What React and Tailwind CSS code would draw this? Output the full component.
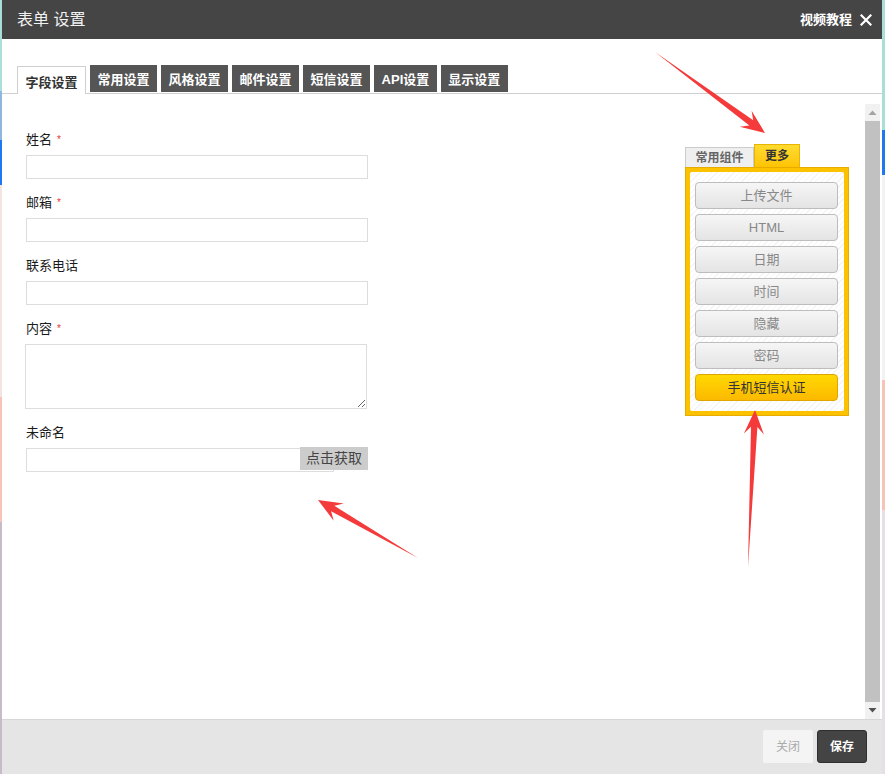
import React from 'react';

const tabs = ['常用设置', '风格设置', '邮件设置', '短信设置', 'API设置', '显示设置'];
const widgets = ['上传文件', 'HTML', '日期', '时间', '隐藏', '密码'];

const leftStrip = [
  ['h-[91px]', 'bg-[#a9dedb]'],
  ['h-[49px]', 'bg-[#8fb6dc]'],
  ['h-[45px]', 'bg-[#1f78f0]'],
  ['h-[212px]', 'bg-[#f3e3e3]'],
  ['h-[125px]', 'bg-[#f6c3b6]'],
  ['flex-1', 'bg-[#c6bcc9]'],
];

const rightStrip = [
  ['h-[130px]', 'bg-[#a9dedb]'],
  ['h-[45px]', 'bg-[#1f78f0]'],
  ['h-[205px]', 'bg-[#f3f3f3]'],
  ['h-[130px]', 'bg-[#f6c3b6]'],
  ['flex-1', 'bg-[#e6e0e6]'],
];

function arrow(tail, tip) {
  const dx = tip[0] - tail[0];
  const dy = tip[1] - tail[1];
  const len = Math.hypot(dx, dy);
  const d = [dx / len, dy / len];
  const n = [-d[1], d[0]];
  const L = 24, W = 10, w = 3.2, back = 17;
  const p = (a, b) => [tip[0] - d[0] * a + n[0] * b, tip[1] - d[1] * a + n[1] * b];
  const pts = [tip, p(L, W), p(back, w), tail, p(back, -w), p(L, -W)];
  return pts.map((q) => q[0].toFixed(1) + ',' + q[1].toFixed(1)).join(' ');
}

function Field({ label, required, children }) {
  return (
    <div className="mb-[15px]">
      <div className="h-[18px] leading-[18px] text-[13px] text-[#1a1a1a] flex items-center">
        {label}
        {required && <span className="ml-[5px] text-[10px] text-[#e33] leading-none">*</span>}
      </div>
      <div className="mt-[6px]">{children}</div>
    </div>
  );
}

export default function App() {
  return (
    <div className="relative w-[885px] h-[774px] overflow-hidden flex bg-white font-['Liberation_Sans','Noto_Sans_CJK_SC',sans-serif]">
      <div className="w-[2px] flex flex-col">
        {leftStrip.map(([h, c], i) => <div key={i} className={h + ' ' + c} />)}
      </div>

      <div className="flex-1 flex flex-col min-w-0">
        <div className="h-[39px] bg-[#454545] flex items-center justify-between pl-[15px] pr-[10px] text-white">
          <div className="text-[16px] text-[#f2f2f2]">表单 设置</div>
          <div className="flex items-center gap-[8px]">
            <span className="text-[13px] font-bold">视频教程</span>
            <svg width="12" height="12" viewBox="0 0 12 12" className="mt-[1px]">
              <path d="M1.5 1.5 L10.5 10.5 M10.5 1.5 L1.5 10.5" stroke="#fff" strokeWidth="2.2" strokeLinecap="square" />
            </svg>
          </div>
        </div>

        <div className="pt-[26px] pl-[15px] flex items-end gap-[4px] border-b border-[#cfcfcf]">
          <div className="h-[28px] -mb-px px-[7.5px] pt-[4px] bg-white border border-b-0 border-[#cfcfcf] flex items-center text-[13px] font-bold text-[#333]">字段设置</div>
          {tabs.map((t) => (
            <div key={t} className="h-[27px] mb-px px-[7.5px] pt-[3px] bg-[#555] flex items-center text-[13px] font-bold text-white">{t}</div>
          ))}
        </div>

        <div className="flex-1 flex pt-[10px] pr-[2px] min-h-0">
          <div className="pl-[24px] pt-[27px] w-[380px]">
            <Field label="姓名" required>
              <input className="block w-[342px] h-[24px] border border-[#ddd] outline-none" />
            </Field>
            <Field label="邮箱" required>
              <input className="block w-[342px] h-[24px] border border-[#ddd] outline-none" />
            </Field>
            <Field label="联系电话">
              <input className="block w-[342px] h-[24px] border border-[#ddd] outline-none" />
            </Field>
            <Field label="内容" required>
              <textarea className="block -ml-px w-[342px] h-[65px] border border-[#ddd] outline-none" />
            </Field>
            <Field label="未命名">
              <div className="relative w-[342px] h-[24px]">
                <input className="block w-[308px] h-[24px] border border-[#ddd] outline-none" />
                <div className="absolute right-0 -top-px w-[68px] h-[23px] bg-[#cccccc] text-[#444] text-[14px] flex items-center justify-center">点击获取</div>
              </div>
            </Field>
          </div>

          <div className="flex-1" />

          <div className="mt-[40px] mr-[16px] w-[164px]">
            <div className="flex items-end h-[23px]">
              <div className="w-[69px] h-[20px] bg-[#efefef] border border-b-0 border-[#ccc] flex items-center justify-center text-[12px] font-bold text-[#666]">常用组件</div>
              <div className="w-[46px] h-[23px] bg-linear-to-b from-[#ffdb2e] to-[#ffc400] border border-b-0 border-[#e8b400] flex items-center justify-center text-[12px] font-bold text-[#333]">更多</div>
            </div>
            <div className="h-[249px] p-[4px] bg-[#fcc200] border border-[#e6ad00]">
              <div className="h-full rounded-[2px] pt-[10px] pl-[5px] pr-[6px] flex flex-col gap-[5px] bg-[repeating-linear-gradient(135deg,#ffffff_0px,#ffffff_3px,#f4f4f4_3px,#f4f4f4_4px)]">
                {widgets.map((w) => (
                  <div key={w} className="h-[27px] rounded-[4px] border border-[#bdbdbd] bg-linear-to-b from-[#f6f6f6] to-[#e4e4e4] flex items-center justify-center text-[13px] text-[#888]">{w}</div>
                ))}
                <div className="h-[27px] rounded-[4px] border border-[#e0a600] bg-linear-to-b from-[#ffd800] to-[#fcb900] flex items-center justify-center text-[13px] text-[#333]">手机短信认证</div>
              </div>
            </div>
          </div>

          <div className="w-[15px] bg-[#f1f1f1] flex flex-col items-center">
            <svg width="15" height="17" viewBox="0 0 15 17">
              <path d="M3.5 11 L7.5 6.5 L11.5 11 Z" fill="#a3a3a3" />
            </svg>
            <div className="w-[15px] flex-1 bg-[#c1c1c1]" />
            <svg width="15" height="17" viewBox="0 0 15 17">
              <path d="M3.5 6 L7.5 10.5 L11.5 6 Z" fill="#505050" />
            </svg>
          </div>
        </div>

        <div className="h-[55px] bg-[#e5e5e5] border-t border-[#d6d6d6] flex items-start justify-end gap-[4px] pt-[10px] pr-[15px]">
          <div className="w-[50px] h-[33px] rounded-[2px] bg-[#f4f4f4] flex items-center justify-center text-[12px] text-[#aaa]">关闭</div>
          <div className="w-[50px] h-[33px] rounded-[3px] bg-[#444] border border-[#2e2e2e] flex items-center justify-center text-[12px] font-bold text-white">保存</div>
        </div>
      </div>

      <div className="w-[3px] flex flex-col">
        {rightStrip.map(([h, c], i) => <div key={i} className={h + ' ' + c} />)}
      </div>

      <svg className="absolute inset-0 pointer-events-none" width="885" height="774" viewBox="0 0 885 774">
        <polygon points={arrow([655, 52], [765, 133])} fill="#f43a3a" />
        <polygon points={arrow([418, 558], [318, 500])} fill="#f43a3a" />
        <polygon points={arrow([748, 567], [755, 410])} fill="#f43a3a" />
      </svg>
    </div>
  );
}
